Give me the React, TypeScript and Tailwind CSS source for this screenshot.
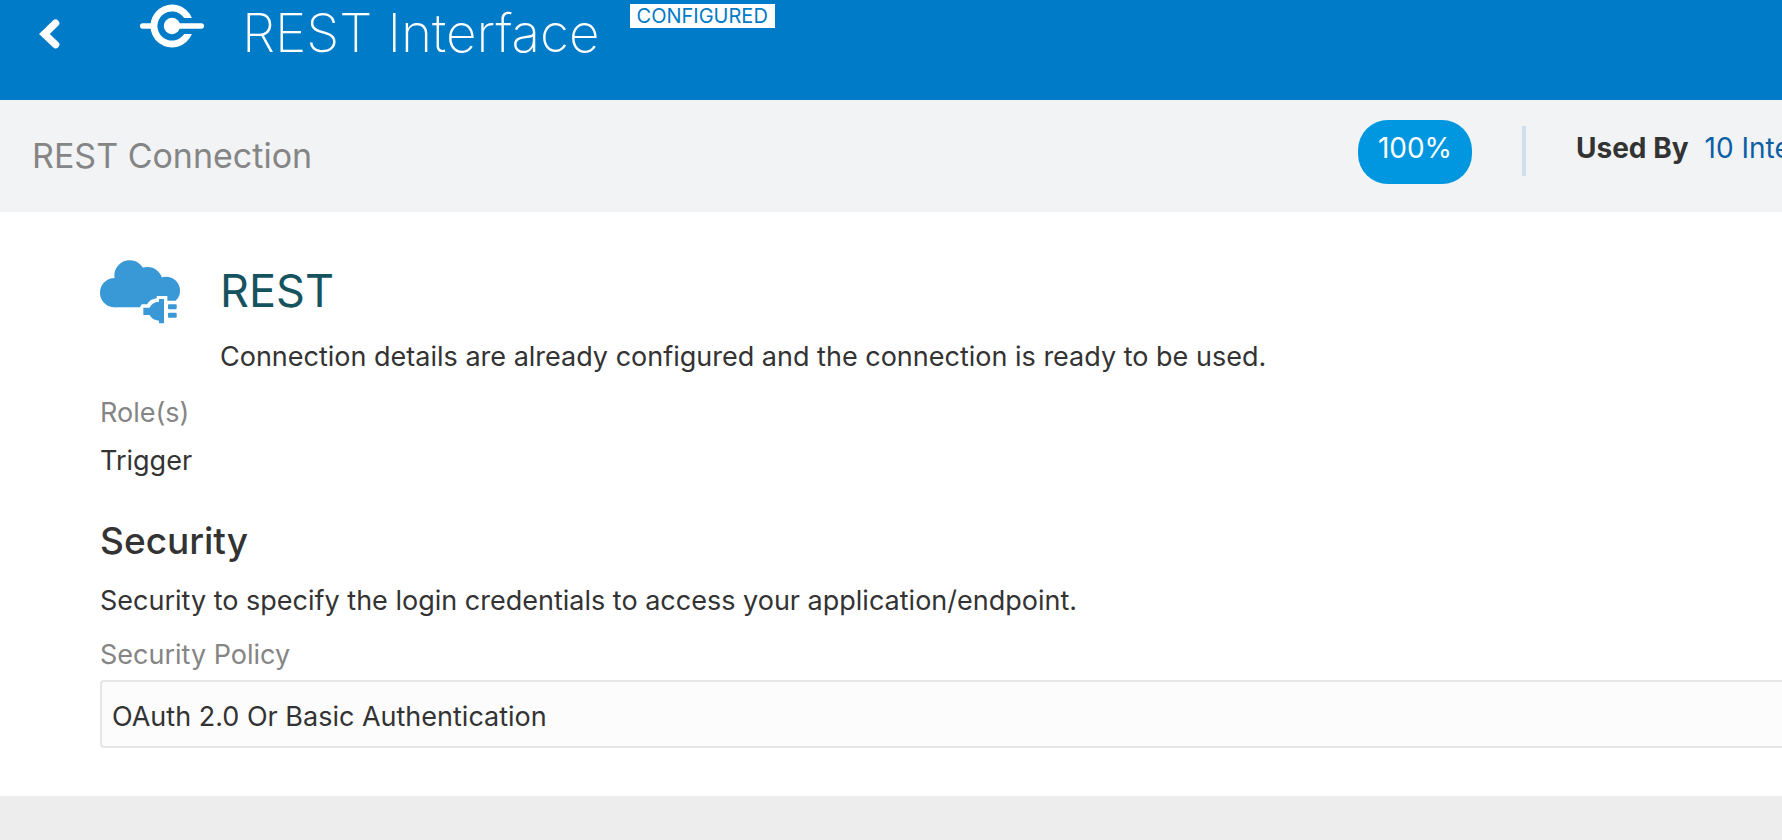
import React from "react";

function BackIcon() {
  return (
    <svg className="block h-8 w-6" viewBox="0 0 24 32" fill="none" aria-hidden="true">
      <path d="M19.6 5.2 8.4 16 19.6 26.6" stroke="currentColor" strokeWidth="7.4" strokeLinecap="round" strokeLinejoin="miter" />
    </svg>
  );
}

function ConnectionIcon() {
  return (
    <svg className="block h-11 w-16" viewBox="0 0 64 44" fill="currentColor" aria-hidden="true">
      <path d="M51.9 14A21.5 21.5 0 1 0 51.9 30H44.2A14.6 14.6 0 1 1 44.2 14Z" />
      <circle cx="32" cy="22" r="8.2" />
      <rect x="0" y="19.3" width="16" height="5.4" rx="2.7" />
      <rect x="32" y="19.3" width="32" height="5.4" rx="2.7" />
    </svg>
  );
}

function CloudPlugIcon() {
  return (
    <svg className="block h-16 w-20" viewBox="0 0 240 192" aria-hidden="true">
      <g fill="#3998d6">
        <circle cx="44" cy="98" r="44" />
        <circle cx="89" cy="47" r="46" />
        <circle cx="142" cy="67" r="46" />
        <circle cx="198" cy="92" r="42" />
        <path d="M44 60H180V142H44Z" />
        <path d="M180 90H236L226 122H180Z" />
      </g>
      <path
        d="M120 142 125 133H141Q150 117 170 115V108H202V122H240V192H120Z"
        fill="#ffffff"
      />
      <g fill="#3998d6">
        <path d="M130 143H149Q156 126 177 125V117H192V190H177V182Q156 180 149 165H130Z" />
        <rect x="204" y="133" width="26" height="15" rx="3" />
        <rect x="204" y="158" width="26" height="15" rx="3" />
      </g>
    </svg>
  );
}

export default function App() {
  return (
    <div className="flex min-h-screen flex-col overflow-hidden bg-[#ededed] font-[Inter,'Liberation_Sans',sans-serif] text-[27px] leading-10 text-[#333333]">
      <header className="flex h-[100px] items-start bg-[#007bc8] text-white">
        <button type="button" aria-label="Back" className="mt-[18px] ml-9">
          <BackIcon />
        </button>
        <div className="mt-1 ml-20">
          <ConnectionIcon />
        </div>
        <h1 className="ml-[38px] text-[53px] leading-[66px] font-extralight whitespace-nowrap">REST Interface</h1>
        <span className="mt-1 ml-[30px] bg-white px-[7px] text-[20px] leading-6 text-[#007bc8]">CONFIGURED</span>
      </header>

      <section className="flex h-[112px] items-start bg-[#f2f3f5]">
        <h2 className="mt-8 ml-8 flex-1 text-[34px] leading-12 whitespace-nowrap text-[#858585]">REST Connection</h2>
        <div className="flex w-[424px] shrink-0 items-start pt-5 text-[28px] whitespace-nowrap">
          <span className="h-16 w-[114px] shrink-0 rounded-[30px] bg-[#0097e0] pt-2 text-center text-white">100%</span>
          <span className="mt-[6px] ml-[50px] h-[50px] w-1 shrink-0 bg-[#d3dfe8]" />
          <span className="mt-2 ml-[50px] font-bold">Used By</span>
          <a href="#integrations" className="mt-2 ml-4 text-[#0a5fa5]">
            10 Integrations
          </a>
        </div>
      </section>

      <main className="bg-white pt-[46px] pb-12 pl-[100px]">
        <div className="flex items-start gap-10">
          <div className="mt-[2px]">
            <CloudPlugIcon />
          </div>
          <div>
            <h2 className="text-[45px] leading-[66px] text-[#15535f]">REST</h2>
            <p className="mt-[13px]">Connection details are already configured and the connection is ready to be used.</p>
          </div>
        </div>
        <dl className="mt-4">
          <dt className="text-[#858585]">Role(s)</dt>
          <dd className="mt-2">Trigger</dd>
        </dl>
        <h3 className="mt-9 text-[37px] leading-12 font-medium">Security</h3>
        <p className="mt-4">Security to specify the login credentials to access your application/endpoint.</p>
        <label htmlFor="policy" className="mt-[14px] block text-[#858585]">
          Security Policy
        </label>
        <input
          id="policy"
          type="text"
          readOnly
          defaultValue="OAuth 2.0 Or Basic Authentication"
          className="mt-[5px] block h-[68px] w-full rounded-l-[4px] border-2 border-r-0 border-[#e6e6e6] bg-[#fcfcfc] pt-1 pl-[10px]"
        />
      </main>
    </div>
  );
}
